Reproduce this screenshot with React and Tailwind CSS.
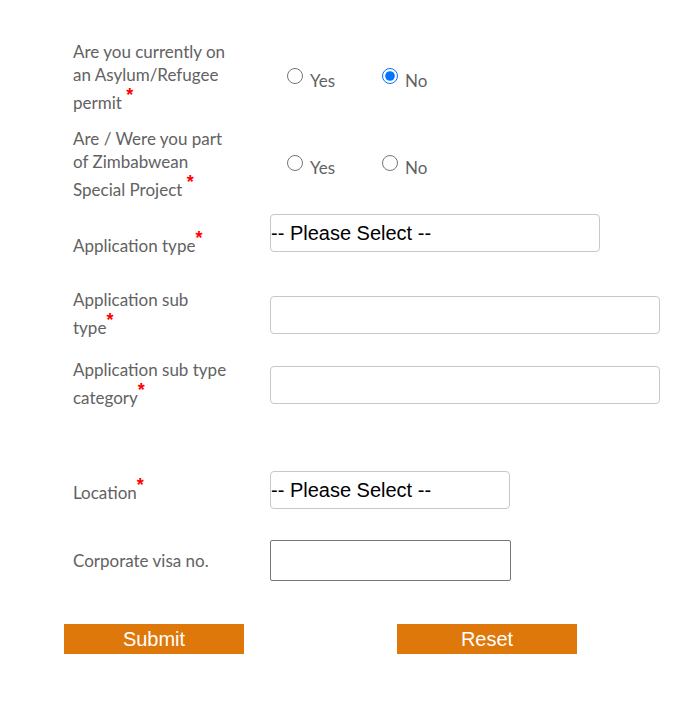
import React from 'react';

const arial = { fontFamily: '"Liberation Sans", Arial, sans-serif' };

const Req = ({ space }) => (
  <>
    {space ? ' ' : ''}
    <span className="align-[8px] text-[18px] font-bold leading-none text-[#ff0000]" style={arial}>
      *
    </span>
  </>
);

const Label = ({ children, className = '' }) => (
  <div className={`w-[180px] shrink-0 text-[17px] leading-[23px] text-[#626262] ${className}`}>
    {children}
  </div>
);

const RadioPair = ({ name, checked }) => (
  <div className="flex pl-[12px] pt-[2px] text-[17px] leading-[23px] text-[#626262]">
    <label className="flex w-[95px] items-start">
      <input type="radio" name={name} defaultChecked={checked === 'yes'} className="m-[4px_3px_0_5px] h-[16px] w-[16px]" />
      <span className="ml-[4px] mt-[5px]">Yes</span>
    </label>
    <label className="flex items-start">
      <input type="radio" name={name} defaultChecked={checked === 'no'} className="m-[4px_3px_0_5px] h-[16px] w-[16px]" />
      <span className="ml-[4px] mt-[5px]">No</span>
    </label>
  </div>
);

const PleaseSelect = ({ width }) => (
  <select
    className={`${width} h-[38px] appearance-none rounded-[4px] border border-[#c8c8c8] bg-white p-0 text-[20px] text-black`}
    style={arial}
    defaultValue=""
  >
    <option value="">-- Please Select --</option>
  </select>
);

export default function App() {
  return (
    <div className="min-h-[723px] bg-white pl-[73px] pt-[40px]" style={{ fontFamily: 'Lato, "Open Sans", sans-serif' }}>
      {/* radio questions */}
      <div className="flex items-center">
        <Label>
          Are you currently on<br />an Asylum/Refugee<br />permit<Req space />
        </Label>
        <div className="ml-[17px]">
          <RadioPair name="asylum" checked="no" />
        </div>
      </div>

      <div className="mt-[13px] flex items-center">
        <Label>
          Are / Were you part<br />of Zimbabwean<br />Special Project<Req space />
        </Label>
        <div className="ml-[17px]">
          <RadioPair name="zim" />
        </div>
      </div>

      {/* dropdowns and text fields */}
      <div className="mt-[13px] flex h-[82px] items-start">
        <Label className="mt-[15px] w-[197px]">
          Application type<Req />
        </Label>
        <PleaseSelect width="w-[330px]" />
      </div>

      <div className="flex h-[70px] items-start">
        <Label className="-mt-[8px] w-[197px]">
          Application sub<br />type<Req />
        </Label>
        <input type="text" className="h-[38px] w-[390px] rounded-[4px] border border-[#c8c8c8] bg-white" />
      </div>

      <div className="flex h-[105px] items-start">
        <Label className="-mt-[8px] w-[197px]">
          Application sub type<br />category<Req />
        </Label>
        <input type="text" className="h-[38px] w-[390px] rounded-[4px] border border-[#c8c8c8] bg-white" />
      </div>

      <div className="flex h-[69px] items-start">
        <Label className="mt-[5px] w-[197px]">
          Location<Req />
        </Label>
        <PleaseSelect width="w-[240px]" />
      </div>

      <div className="flex h-[84px] items-start">
        <Label className="mt-[9px] w-[197px]">Corporate visa no.</Label>
        <input type="text" className="h-[41px] w-[241px] rounded-[2px] border border-[#767676] bg-white" />
      </div>

      <div className="-ml-[9px] flex gap-[153px]">
        <button type="button" className="h-[30px] w-[180px] bg-[#de780a] text-[20px] text-white" style={arial}>
          Submit
        </button>
        <button type="button" className="h-[30px] w-[180px] bg-[#de780a] text-[20px] text-white" style={arial}>
          Reset
        </button>
      </div>
    </div>
  );
}
